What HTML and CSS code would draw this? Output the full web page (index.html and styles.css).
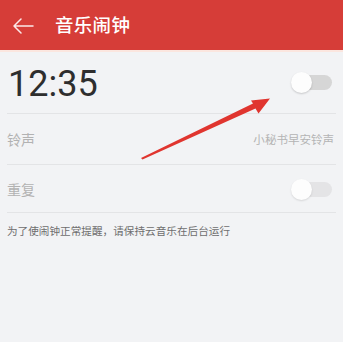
FILE: index.html
```html
<!DOCTYPE html>
<html lang="zh-CN">
<head>
<meta charset="utf-8">
<title>音乐闹钟</title>
<link rel="stylesheet" href="styles.css">
</head>
<body>
<header class="topbar">
  <svg class="back" width="22" height="16" viewBox="0 0 22 16" aria-hidden="true">
    <path d="M21 8H2M9 1L2 8l7 7" fill="none" stroke="#fbe9e8" stroke-width="1.5" stroke-linecap="round" stroke-linejoin="round"/>
  </svg>
  <h1 class="title">音乐闹钟</h1>
</header>
<main class="content">
  <div class="row row-time">
    <span class="time">12:35</span>
    <span class="switch"><span class="thumb"></span></span>
  </div>
  <div class="row row-ring">
    <span class="label">铃声</span>
    <span class="value">小秘书早安铃声</span>
  </div>
  <div class="row row-repeat">
    <span class="label">重复</span>
    <span class="switch switch-faint"><span class="thumb"></span></span>
  </div>
  <p class="note">为了使闹钟正常提醒，请保持云音乐在后台运行</p>
</main>
<svg class="annot-arrow" width="343" height="342" viewBox="0 0 343 342" aria-hidden="true">
  <polygon points="141,158 253,103.5 251,100.5 270,98.5 258.5,113.5 255.5,108.5 142.5,159.5" fill="#e0352f"/>
</svg>
</body>
</html>
```
FILE: styles.css
```css
html, body {
  margin: 0;
  padding: 0;
}
body {
  width: 343px;
  height: 342px;
  background: #f2f3f5;
  font-family: "Noto Sans CJK SC", "Noto Sans", sans-serif;
  position: relative;
  overflow: hidden;
}
.topbar {
  height: 50px;
  background: #d63d38;
  display: flex;
  align-items: center;
  border-bottom: 2px solid #fbe6df;
}
.back {
  margin-left: 12px;
  margin-top: 1px;
}
.title {
  margin: 0 0 0 21px;
  font-size: 18.5px;
  font-weight: 500;
  color: #fff;
  letter-spacing: 0.3px;
  line-height: 1;
  position: relative;
  top: -1px;
}
.content {
  padding: 0 7px;
}
.row {
  display: flex;
  align-items: center;
  justify-content: space-between;
  border-bottom: 1px solid #e3e4e6;
}
.row-time {
  height: 61px;
}
.row-ring {
  height: 50px;
}
.row-repeat {
  height: 47px;
}
.time {
  font-family: Roboto, "Noto Sans", sans-serif;
  font-size: 36px;
  font-weight: 400;
  color: #2e2e2e;
  line-height: 1;
  margin-left: 1px;
  position: relative;
  top: 1px;
}
.label {
  font-size: 14px;
  color: #b2b2b2;
  line-height: 1;
}
.value {
  font-size: 12px;
  color: #b4b4b4;
  line-height: 1;
  margin-right: 2px;
  transform: scale(0.96);
  transform-origin: right center;
}
.switch {
  position: relative;
  width: 38px;
  height: 15px;
  border-radius: 8px;
  background: #d6d6d6;
  margin-right: 4px;
  display: flex;
  align-items: center;
}
.switch-faint {
  background: #e4e4e6;
  top: 1px;
}
.thumb {
  position: absolute;
  left: -3px;
  top: -3px;
  width: 21px;
  height: 21px;
  border-radius: 50%;
  background: #fdfdfd;
  box-shadow: 0 1px 2px rgba(0, 0, 0, 0.18);
}
.switch-faint .thumb {
  box-shadow: 0 1px 2px rgba(0, 0, 0, 0.12);
}
.note {
  margin: 10px 0 0;
  font-size: 12px;
  color: #6e6e6e;
  line-height: 16px;
  white-space: nowrap;
  transform: scale(0.885);
  transform-origin: left center;
}
.annot-arrow {
  position: absolute;
  left: 0;
  top: 0;
  pointer-events: none;
}
```
